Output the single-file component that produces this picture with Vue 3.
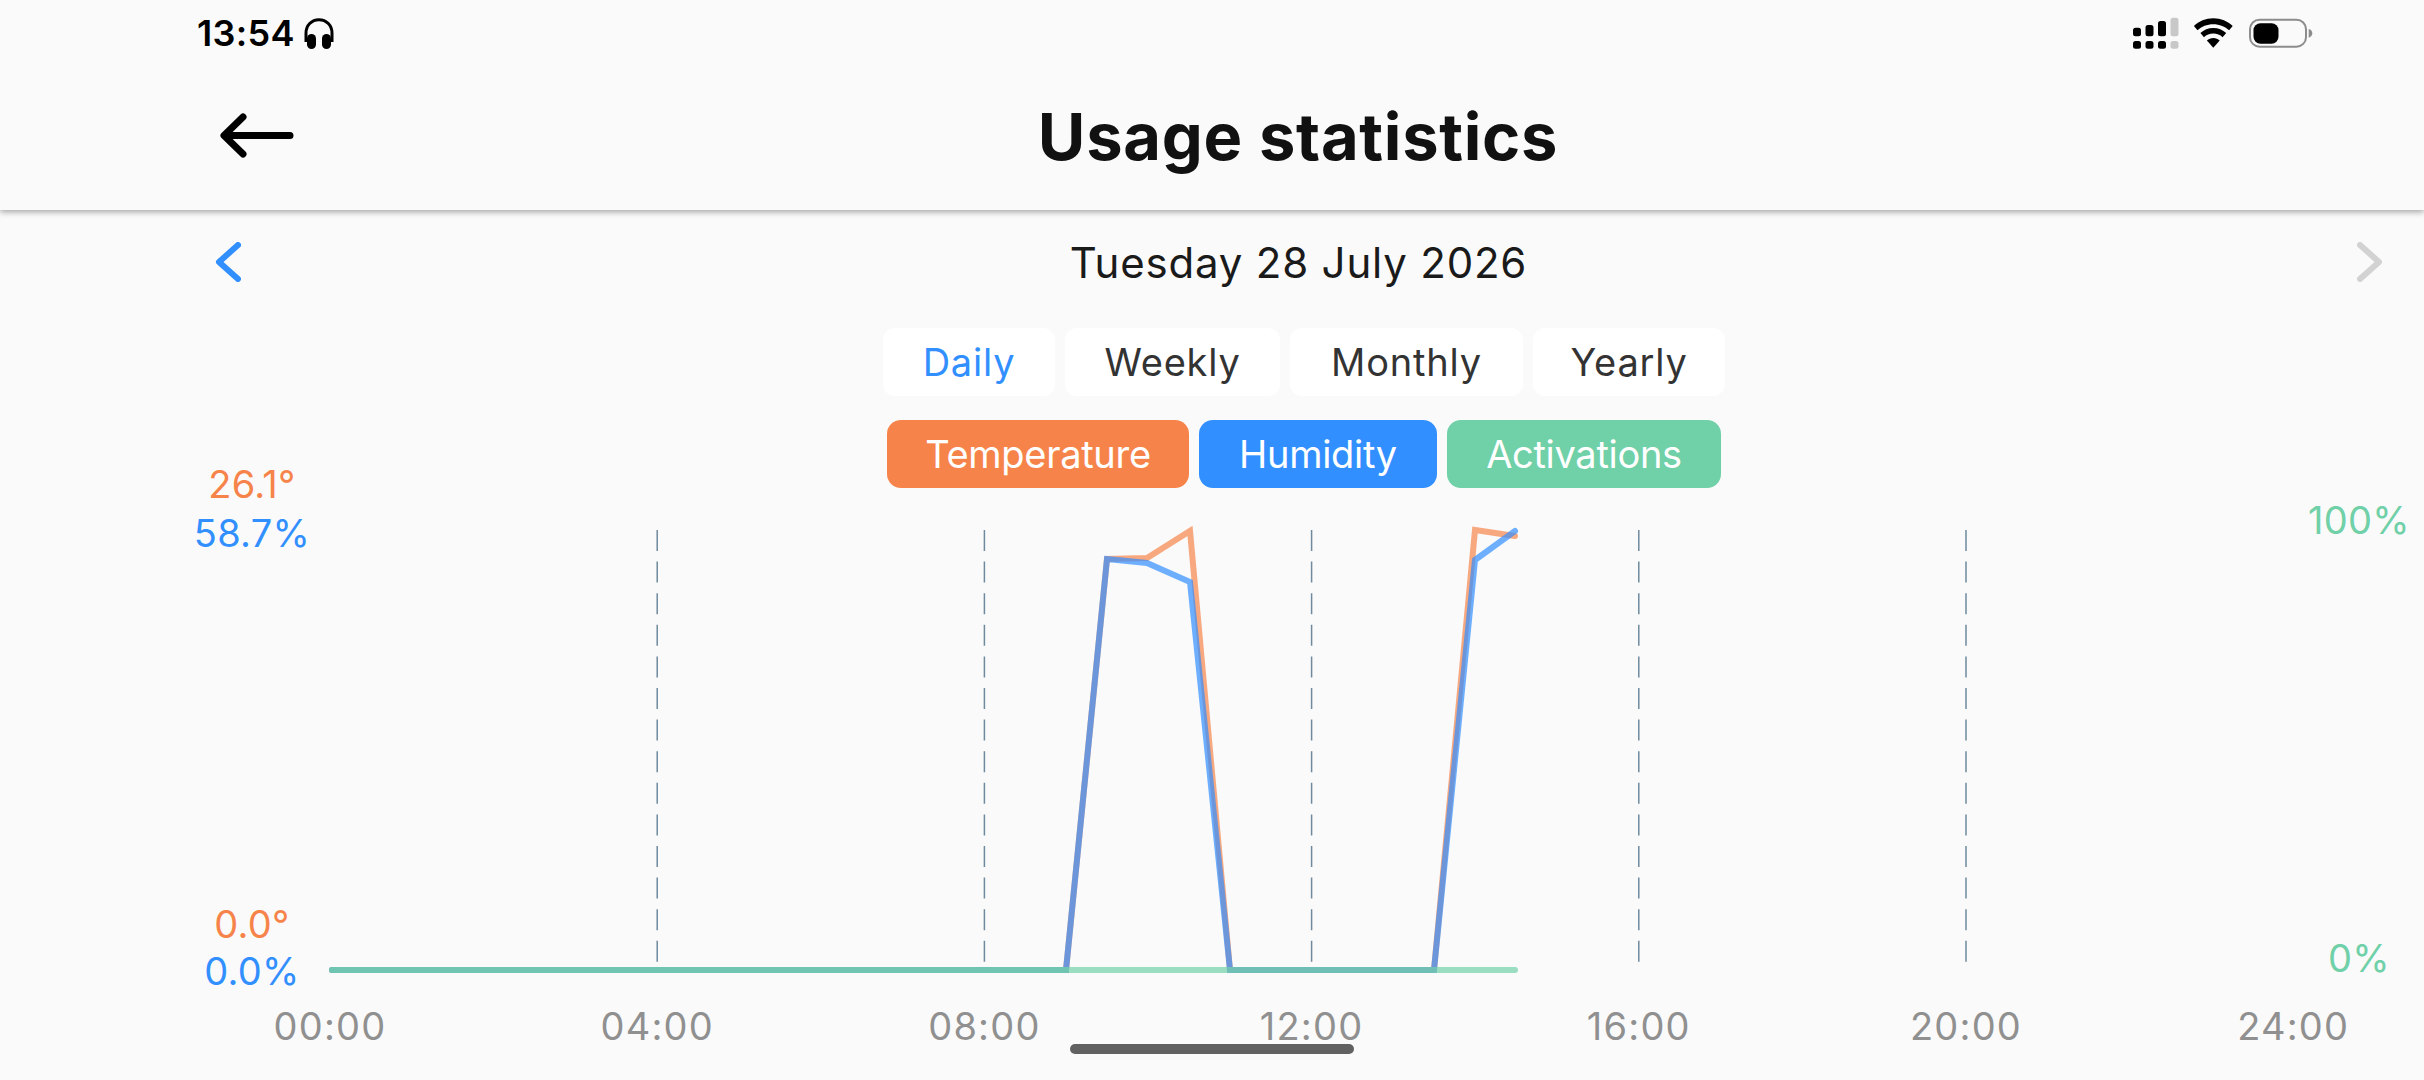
<script setup>
const tabs = [
  { label: 'Daily', width: 172, active: true },
  { label: 'Weekly', width: 215 },
  { label: 'Monthly', width: 233 },
  { label: 'Yearly', width: 192 },
]
const chips = [
  { label: 'Temperature', width: 302, color: '#f6844a' },
  { label: 'Humidity', width: 238, color: '#318fff' },
  { label: 'Activations', width: 274, color: '#70d0a8' },
]
const hours = ['00:00', '04:00', '08:00', '12:00', '16:00', '20:00', '24:00']
const xAt = (i) => 330 + i * 327.2
const gridX = [1, 2, 3, 4, 5].map((i) => xAt(i))
const temperature = '332,970 1066,970 1107,559 1147,558 1190,531 1230,970 1434,970 1475,530 1515,536'
const humidity = '332,970 1066,970 1107,559 1147,563 1190,582 1230,970 1434,970 1475,560 1515,531'
const activations = '332,970 1515,970'
const activationsEarly = '332,970 1066,970'
</script>

<template>
  <div class="screen">
    <header class="topbar">
      <div class="status">
        <span class="clock">13:54</span>
        <svg class="headphones" viewBox="0 0 30 31" width="30" height="31">
          <path d="M2 24V15C2 7.500 7.500 1.700 15 1.700S28 7.500 28 15v9" fill="none" stroke="#000" stroke-width="3" />
          <rect x="3" y="16" width="9" height="15" rx="4.500" fill="#000" />
          <rect x="18" y="16" width="9" height="15" rx="4.500" fill="#000" />
        </svg>
        <svg class="status-icons" viewBox="2130 14 186 36" width="186" height="36">
          <g fill="#000">
            <rect x="2133" y="26.700" width="8" height="8.600" rx="2.500" />
            <rect x="2145.500" y="24" width="8" height="11.300" rx="2.500" />
            <rect x="2158" y="20" width="8" height="15.300" rx="2.500" />
            <rect x="2133" y="40" width="8" height="7.700" rx="2.500" />
            <rect x="2145.500" y="40" width="8" height="7.700" rx="2.500" />
            <rect x="2158" y="40" width="8" height="7.700" rx="2.500" />
          </g>
          <g fill="#c8c8c8">
            <rect x="2170.500" y="16.700" width="8" height="18.600" rx="2.500" />
            <rect x="2170.500" y="40" width="8" height="7.700" rx="2.500" />
          </g>
          <g fill="#000">
            <path d="M2213.300 17.300c7.600 0 14.400 3 19.400 7.700l-3.600 4.300c-4-3.800-9.600-6.100-15.800-6.100s-11.800 2.300-15.800 6.100l-3.600-4.300c5-4.700 11.800-7.700 19.400-7.700z" />
            <path d="M2213.300 27c5 0 9.500 1.900 12.900 5l-3.600 4.200c-2.400-2.300-5.700-3.600-9.300-3.600s-6.900 1.300-9.300 3.600l-3.600-4.200c3.400-3.100 7.900-5 12.900-5z" />
            <path d="M2213.300 37c2.500 0 4.700.9 6.400 2.400l-6.400 7.300-6.400-7.300c1.700-1.500 3.900-2.400 6.400-2.400z" />
          </g>
          <rect x="2250" y="18.700" width="56" height="27" rx="9.500" fill="none" stroke="#8c8c8c" stroke-width="2" />
          <rect x="2253.500" y="22.300" width="25" height="20.400" rx="7" fill="#000" />
          <path d="M2308.700 28c2.200.5 3.600 2.200 3.600 4.300s-1.400 3.800-3.600 4.400z" fill="#8c8c8c" />
        </svg>
      </div>
      <div class="title-row">
        <svg class="back" viewBox="0 0 78 48" width="78" height="48">
          <path d="M71 23.500H6M24 5 5 23.500 24 42" fill="none" stroke="#000" stroke-width="7" stroke-linecap="round" stroke-linejoin="round" />
        </svg>
        <h1 class="title">Usage statistics</h1>
      </div>
    </header>

    <main class="content">
      <div class="date-row">
        <svg viewBox="0 0 26 40" width="26" height="40">
          <path d="M23 3 4 20l19 17" fill="none" stroke="#318fff" stroke-width="6" stroke-linecap="round" stroke-linejoin="round" />
        </svg>
        <span class="date">Tuesday 28 July 2026</span>
        <svg viewBox="0 0 26 40" width="26" height="40">
          <path d="M4 3l19 17L4 37" fill="none" stroke="#d2d2d2" stroke-width="6" stroke-linecap="round" stroke-linejoin="round" />
        </svg>
      </div>

      <div class="tabs">
        <button
          v-for="tab in tabs"
          :key="tab.label"
          class="tab"
          :class="{ active: tab.active }"
          :style="{ width: tab.width + 'px' }"
        >{{ tab.label }}</button>
      </div>

      <div class="chips">
        <button
          v-for="chip in chips"
          :key="chip.label"
          class="chip"
          :style="{ width: chip.width + 'px', background: chip.color }"
        >{{ chip.label }}</button>
      </div>

      <svg class="chart" viewBox="0 460 2424 620" width="2424" height="620">
        <line
          v-for="x in gridX"
          :key="x"
          :x1="x"
          :x2="x"
          y1="530"
          y2="962"
          class="grid"
        />
        <polyline :points="temperature" class="series" stroke="#f6844a" />
        <polyline :points="humidity" class="series" stroke="#318fff" />
        <polyline :points="activations" class="series" stroke="#70d0a8" />
        <polyline :points="activationsEarly" class="series early" stroke="#70d0a8" />

        <text x="252" y="498" class="axis" fill="#f6844a">26.1°</text>
        <text x="252" y="547" class="axis" fill="#318fff">58.7%</text>
        <text x="252" y="938" class="axis" fill="#f6844a">0.0°</text>
        <text x="252" y="985" class="axis" fill="#318fff">0.0%</text>
        <text x="2359" y="534" class="axis" fill="#70d0a8">100%</text>
        <text x="2359" y="972" class="axis" fill="#70d0a8">0%</text>
        <text
          v-for="(hour, i) in hours"
          :key="hour"
          :x="xAt(i)"
          y="1040"
          class="axis hour"
          fill="#909090"
        >{{ hour }}</text>
      </svg>
    </main>

    <div class="home-indicator"></div>
  </div>
</template>

<style>
html, body { margin: 0; background: #fafafa; }
</style>

<style scoped>
.screen {
  position: relative;
  width: 2424px;
  height: 1080px;
  overflow: hidden;
  background: #fafafa;
  font-family: Inter, "Liberation Sans", sans-serif;
  color: #111;
}
.topbar {
  position: relative;
  z-index: 1;
  height: 210px;
  background: #fafafa;
  box-shadow: 0 2px 6px rgba(0, 0, 0, 0.35);
}
.status {
  display: flex;
  align-items: center;
  height: 66px;
  padding-left: 197px;
}
.clock {
  font-size: 36px;
  font-weight: 600;
  letter-spacing: 0.3px;
  color: #000;
}
.headphones { margin-left: 9px; }
.status-icons { margin-left: auto; margin-right: 108px; }
.title-row {
  position: relative;
  display: flex;
  justify-content: center;
  align-items: center;
  height: 140px;
  padding-left: 172px;
}
.back {
  position: absolute;
  left: 219px;
  top: 46px;
}
.title {
  margin: 0;
  font-size: 65px;
  font-weight: 700;
  letter-spacing: 0.7px;
  color: #111;
}
.date-row {
  display: flex;
  justify-content: space-between;
  align-items: center;
  box-sizing: border-box;
  height: 106px;
  padding: 0 42px 2px 215px;
}
.date {
  font-size: 42px;
  font-weight: 380;
  letter-spacing: 0.8px;
  color: #1a1a1a;
}
.tabs, .chips {
  display: flex;
  justify-content: center;
  gap: 10px;
  padding-left: 184px;
}
.tabs { margin-top: 12px; }
.chips { margin-top: 24px; }
.tab, .chip {
  height: 68px;
  padding: 0;
  border: 0;
  font-family: inherit;
  font-size: 38px;
  font-weight: 380;
}
.tab {
  border-radius: 12px;
  background: #fff;
  color: #333;
  letter-spacing: 0.8px;
}
.tab.active { color: #318fff; }
.chip {
  border-radius: 14px;
  color: #fff;
  letter-spacing: -0.3px;
}
.chart {
  display: block;
  margin-top: -28px;
}
.grid {
  stroke: #6f8a9e;
  stroke-width: 1.500;
  stroke-dasharray: 21 10.600;
}
.series {
  fill: none;
  stroke-width: 6;
  stroke-linecap: round;
  stroke-linejoin: miter;
  opacity: 0.7;
}
.series.early { opacity: 0.3; }
.axis {
  font-family: Inter, "Liberation Sans", sans-serif;
  font-size: 38px;
  font-weight: 400;
  letter-spacing: 0.3px;
  text-anchor: middle;
}
.hour { letter-spacing: 1.200px; }
.home-indicator {
  position: absolute;
  left: 1070px;
  top: 1044px;
  width: 284px;
  height: 10px;
  border-radius: 5px;
  background: #616161;
}
</style>
